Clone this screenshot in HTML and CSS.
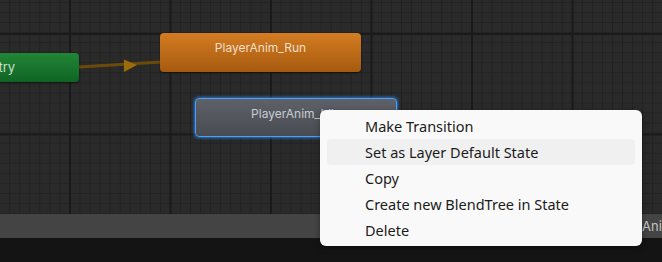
FILE: index.html
```html
<!DOCTYPE html>
<html lang="en">
<head>
  <meta charset="UTF-8" />
  <title>Animator – Base Layer</title>
  <link rel="stylesheet" href="styles.css">
</head>
<body>
  <div class="graph">
    <svg class="links" width="662" height="214">
      <line x1="79" y1="67" x2="161" y2="62" stroke="#6b4b0c" stroke-width="3" />
      <polygon points="124,59.5 137,65 124,72" fill="#9c6c0c" />
    </svg>

    <div class="node node-entry">Entry</div>
    <div class="node node-run">PlayerAnim_Run</div>
    <div class="node node-idle selected">PlayerAnim_Idle</div>
  </div>

  <div class="status-bar">
    <span class="path">Animation/PlayerAnim.controller</span>
  </div>
  <div class="footer"></div>

  <ul class="context-menu">
    <li>Make Transition</li>
    <li class="hover">Set as Layer Default State</li>
    <li>Copy</li>
    <li>Create new BlendTree in State</li>
    <li>Delete</li>
  </ul>
</body>
</html>
```

FILE: styles.css
```css
body {
  position: relative;
  margin: 0;
  background: #141414;
  font-family: Inter, 'Noto Sans', sans-serif;
  overflow: hidden;
}

.graph {
  position: relative;
  height: 214px;
  overflow: hidden;
  background-color: #2a2a2a;
  background-image:
    linear-gradient(90deg, #1a1a1a 1.5px, transparent 1.5px),
    linear-gradient(0deg, transparent 99px, #1a1a1a 99px, #1a1a1a 100.5px),
    linear-gradient(90deg, #222 1px, transparent 1px),
    linear-gradient(0deg, transparent 9.05px, #222 9.05px);
  background-size: 100.5px 100%, 100% 100.5px, 10.05px 100%, 100% 10.05px;
  background-position: 69px 0, 0 -67.5px, 9.2px 0, 0 2px;
}

.links {
  position: absolute;
  left: 0;
  top: 0;
}

.node {
  position: absolute;
  box-sizing: border-box;
  border-radius: 4px;
  color: rgba(255, 255, 255, 0.78);
  font-size: 12px;
  text-align: center;
  white-space: nowrap;
  box-shadow: 0 1px 2px rgba(0, 0, 0, 0.5);
}

.node-entry {
  left: -81px;
  top: 53px;
  width: 160px;
  height: 29px;
  line-height: 28px;
  font-size: 13px;
  background: linear-gradient(#218637, #0f6424);
}

.node-run {
  left: 160px;
  top: 33px;
  width: 201px;
  height: 39px;
  padding-top: 7px;
  background: linear-gradient(#d47c22, #a65a0e);
}

.node-idle {
  left: 195px;
  top: 98px;
  width: 202px;
  height: 39px;
  padding-top: 7px;
  color: rgba(230, 234, 240, 0.8);
  background: linear-gradient(#5e6168, #484b51);
}

.selected {
  border: 1px solid #4d9ef5;
  box-shadow: 0 0 3px 1px rgba(40, 130, 230, 0.85);
}

.context-menu {
  position: absolute;
  left: 320px;
  top: 110px;
  width: 322px;
  box-sizing: border-box;
  margin: 0;
  padding: 3px 7px;
  list-style: none;
  background: #f9f9f9;
  border-radius: 6px;
  box-shadow: 0 2px 6px rgba(0, 0, 0, 0.35);
  font-family: 'Noto Sans', sans-serif;
  font-size: 14.5px;
  color: #1b1b1b;
}

.context-menu li {
  height: 26px;
  line-height: 26px;
  padding-left: 38px;
  border-radius: 4px;
}

.context-menu li.hover {
  background: #f0f0f0;
}

.status-bar {
  height: 24px;
  background: #444;
  overflow: hidden;
  white-space: nowrap;
}

.path {
  display: inline-block;
  margin-left: 642px;
  line-height: 24px;
  font-size: 13px;
  color: #c4c4c4;
}

.footer {
  height: 24px;
  background: #141414;
}
```
